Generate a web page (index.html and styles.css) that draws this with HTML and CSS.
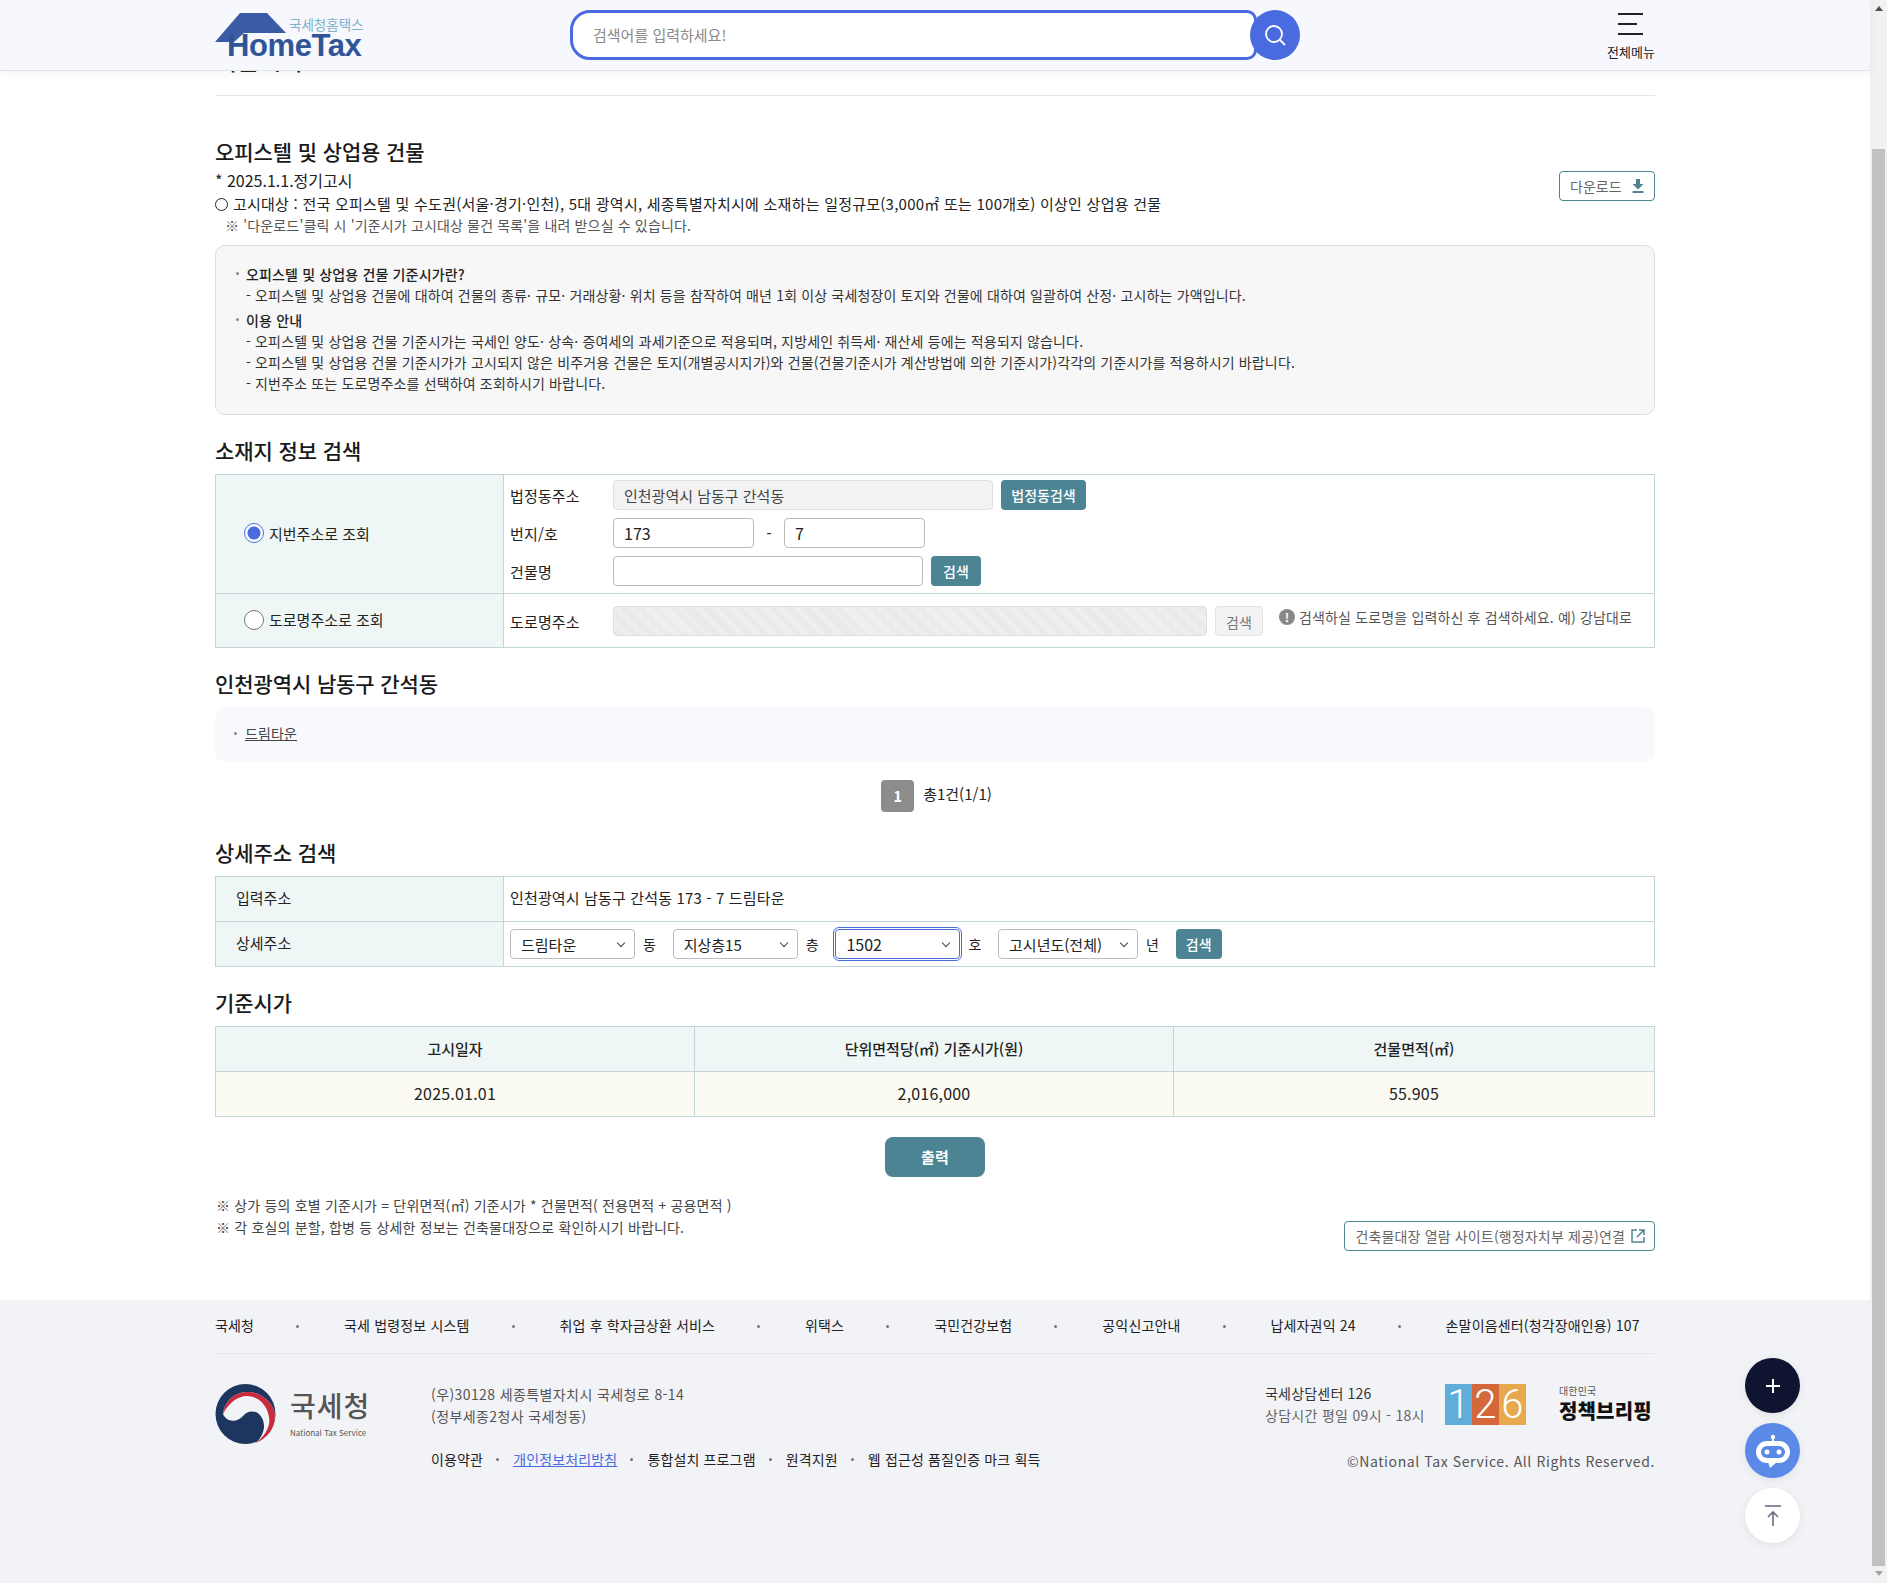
FILE: index.html
```html
<!DOCTYPE html>
<html lang="ko">
<head>
<meta charset="utf-8">
<title>오피스텔 및 상업용 건물 기준시가</title>
<link rel="stylesheet" href="styles.css">
</head>
<body>
<div class="page">
<div class="view">

<div class="topbar">
  <div class="topbar-in">
    <a class="logo">
      <svg class="logo-roof" width="71" height="30" viewBox="0 0 71 30"><polygon points="25,0 52,0 71,20 29,20 19,29 0,29" fill="#3a5ba5"/></svg>
      <span class="logo-ko">국세청홈택스</span>
      <span class="logo-en">HomeTax</span>
    </a>
    <div class="search">
      <input class="search-input" type="text" placeholder="검색어를 입력하세요!">
      <span class="search-btn">
        <svg width="24" height="24" viewBox="0 0 24 24" fill="none" stroke="#fff" stroke-width="1.8"><circle cx="11" cy="11" r="8"/><path d="M17 17l5 5"/></svg>
      </span>
    </div>
    <div class="allmenu">
      <span class="bar"></span>
      <span class="bar bar-mid"></span>
      <span class="bar"></span>
      <span class="allmenu-txt">전체메뉴</span>
    </div>
  </div>
</div>

<div class="wrap">
  <div class="page-title">기준시가</div>

  <h2 class="first-h">오피스텔 및 상업용 건물</h2>
  <div class="intro">
    <div>
      <p class="intro-date">* 2025.1.1.정기고시</p>
      <p class="intro-target"><span class="ring"></span>고시대상 : 전국 오피스텔 및 수도권(서울·경기·인천), 5대 광역시, 세종특별자치시에 소재하는 일정규모(3,000㎡ 또는 100개호) 이상인 상업용 건물</p>
      <p class="intro-note">※ '다운로드'클릭 시 '기준시가 고시대상 물건 목록'을 내려 받으실 수 있습니다.</p>
    </div>
    <a class="btn-line btn-down">다운로드
      <svg width="12" height="14" viewBox="0 0 12 14" fill="#4c8494"><path d="M4 0h4v5h3.500L6 10.500 0.500 5H4z"/><rect x="0.500" y="12" width="11" height="2"/></svg>
    </a>
  </div>

  <div class="infobox">
    <p class="info-t"><b>오피스텔 및 상업용 건물 기준시가란?</b></p>
    <p class="info-d">- 오피스텔 및 상업용 건물에 대하여 건물의 종류· 규모· 거래상황· 위치 등을 참작하여 매년 1회 이상 국세청장이 토지와 건물에 대하여 일괄하여 산정· 고시하는 가액입니다.</p>
    <p class="info-t info-gap"><b>이용 안내</b></p>
    <p class="info-d">- 오피스텔 및 상업용 건물 기준시가는 국세인 양도· 상속· 증여세의 과세기준으로 적용되며, 지방세인 취득세· 재산세 등에는 적용되지 않습니다.</p>
    <p class="info-d">- 오피스텔 및 상업용 건물 기준시가가 고시되지 않은 비주거용 건물은 토지(개별공시지가)와 건물(건물기준시가 계산방법에 의한 기준시가)각각의 기준시가를 적용하시기 바랍니다.</p>
    <p class="info-d">- 지번주소 또는 도로명주소를 선택하여 조회하시기 바랍니다.</p>
  </div>

  <h2>소재지 정보 검색</h2>
  <table class="tbl">
    <tr>
      <th class="th-radio"><label class="radio"><input type="radio" name="addr" checked>지번주소로 조회</label></th>
      <td class="td-form">
        <div class="frow">
          <span class="flabel">법정동주소</span>
          <input class="inp inp-addr inp-ro" type="text" value="인천광역시 남동구 간석동" readonly>
          <a class="btn btn-law">법정동검색</a>
        </div>
        <div class="frow">
          <span class="flabel">번지/호</span>
          <input class="inp inp-num" type="text" value="173">
          <span class="dash">-</span>
          <input class="inp inp-num" type="text" value="7">
        </div>
        <div class="frow">
          <span class="flabel">건물명</span>
          <input class="inp inp-bld" type="text">
          <a class="btn btn-sm">검색</a>
        </div>
      </td>
    </tr>
    <tr>
      <th class="th-radio"><label class="radio"><input type="radio" name="addr">도로명주소로 조회</label></th>
      <td class="td-form td-road">
        <div class="frow">
          <span class="flabel">도로명주소</span>
          <div class="inp inp-road"></div>
          <a class="btn-off">검색</a>
          <span class="hint"><span class="hint-ico">!</span>검색하실 도로명을 입력하신 후 검색하세요. 예) 강남대로</span>
        </div>
      </td>
    </tr>
  </table>

  <h2>인천광역시 남동구 간석동</h2>
  <div class="listbox"><span class="dot"></span><a class="listlink">드림타운</a></div>

  <div class="paging"><span class="pg-on">1</span><span class="pg-total">총1건(1/1)</span></div>

  <h2 class="h-detail">상세주소 검색</h2>
  <table class="tbl tbl-detail">
    <tr class="row-addr">
      <th class="th-left">입력주소</th>
      <td class="td-val">인천광역시 남동구 간석동 173 - 7 드림타운</td>
    </tr>
    <tr>
      <th class="th-left">상세주소</th>
      <td class="td-val">
        <div class="selrow">
          <span class="sel"><select><option>드림타운</option></select></span><span class="unit">동</span>
          <span class="sel"><select><option>지상층15</option></select></span><span class="unit">층</span>
          <span class="sel sel-focus"><select><option>1502</option></select></span><span class="unit">호</span>
          <span class="sel sel-year"><select><option>고시년도(전체)</option></select></span><span class="unit">년</span>
          <a class="btn btn-sm btn-detail">검색</a>
        </div>
      </td>
    </tr>
  </table>

  <h2 class="h-price">기준시가</h2>
  <table class="tbl tbl-price">
    <tr>
      <th class="col-a">고시일자</th>
      <th class="col-b">단위면적당(㎡) 기준시가(원)</th>
      <th>건물면적(㎡)</th>
    </tr>
    <tr>
      <td>2025.01.01</td>
      <td>2,016,000</td>
      <td>55.905</td>
    </tr>
  </table>

  <div class="print-wrap"><a class="btn-print">출력</a></div>

  <div class="notes">
    <div>
      <p>※ 상가 등의 호별 기준시가 = 단위면적(㎡) 기준시가 * 건물면적( 전용면적 + 공용면적 )</p>
      <p>※ 각 호실의 분할, 합병 등 상세한 정보는 건축물대장으로 확인하시기 바랍니다.</p>
    </div>
    <a class="btn-line btn-ext">건축물대장 열람 사이트(행정자치부 제공)연결
      <svg width="14" height="14" viewBox="0 0 14 14" fill="none" stroke="#4c8494" stroke-width="1.500"><path d="M6 1H1v12h12V8"/><path d="M8 1h5v5M13 1L6 8"/></svg>
    </a>
  </div>
</div>

<div class="footer">
  <div class="foot-in">
    <ul class="foot-links">
      <li>국세청</li>
      <li>국세 법령정보 시스템</li>
      <li>취업 후 학자금상환 서비스</li>
      <li>위택스</li>
      <li>국민건강보험</li>
      <li>공익신고안내</li>
      <li>납세자권익 24</li>
      <li>손말이음센터(청각장애인용) 107</li>
    </ul>
    <div class="foot-body">
      <div class="nts">
        <svg width="61" height="60" viewBox="0 0 61 60">
          <circle cx="30.500" cy="30" r="30" fill="#1d365f"/>
          <path d="M8 30C10 15 22 7 35 8c15 2 25 14 25 24 0 13-8 22-19 27 9-9 11-21 3-29-6-5-13-2-16 2-4 5-12 6-16 3-2-2-3.500-3-4-5z" fill="#f2f3f7"/>
          <path d="M8 30C10 15 22 7 35 8c15 2 25 14 25 24 0 13-8 22-19 27 9-7 15-17 13-26C52 20 42 12 32 12 22 12 13 20 8 30z" fill="#c72b3c"/>
        </svg>
        <div class="nts-txt">
          <span class="nts-ko">국세청</span>
          <span class="nts-en">National Tax Service</span>
        </div>
      </div>
      <div class="foot-mid">
        <p class="addr">(우)30128 세종특별자치시 국세청로 8-14</p>
        <p class="addr">(정부세종2청사 국세청동)</p>
        <ul class="foot-sub">
          <li>이용약관</li>
          <li><a class="privacy">개인정보처리방침</a></li>
          <li>통합설치 프로그램</li>
          <li>원격지원</li>
          <li>웹 접근성 품질인증 마크 획득</li>
        </ul>
      </div>
      <div class="foot-right">
        <div class="foot-call">
          <div class="call-txt">
            <p class="call-t">국세상담센터 126</p>
            <p class="call-d">상담시간 평일 09시 - 18시</p>
          </div>
          <div class="n126"><span class="n1">1</span><span class="n2">2</span><span class="n6">6</span></div>
          <div class="brief">
            <span class="brief-s">대한민국</span>
            <span class="brief-b">정책브리핑</span>
          </div>
        </div>
        <p class="copy">©National Tax Service. All Rights Reserved.</p>
      </div>
    </div>
  </div>
</div>

<div class="fabs">
  <span class="fab fab-plus">
    <svg width="20" height="20" viewBox="0 0 20 20" stroke="#fff" stroke-width="2"><path d="M10 3v14M3 10h14"/></svg>
  </span>
  <span class="fab fab-bot">
    <svg width="55" height="55" viewBox="0 0 55 55">
      <circle cx="28" cy="14" r="2.200" fill="#fff"/>
      <rect x="27" y="14" width="2" height="5" fill="#fff"/>
      <rect x="11" y="18" width="34" height="22" rx="11" fill="#fff"/>
      <path d="M23 39h9l-7 6z" fill="#fff"/>
      <rect x="16" y="23" width="24" height="12" rx="6" fill="#5b89e8"/>
      <circle cx="22" cy="29" r="2.500" fill="#fff"/>
      <circle cx="34" cy="29" r="2.500" fill="#fff"/>
    </svg>
  </span>
  <span class="fab fab-top">
    <svg width="20" height="24" viewBox="0 0 20 24" fill="none" stroke="#6d6d86" stroke-width="1.600"><path d="M2 2h16"/><path d="M10 22V9M5 13l5-5 5 5"/></svg>
  </span>
</div>

</div>
<div class="sbar">
  <span class="sbar-up"></span>
  <span class="sbar-thumb"></span>
  <span class="sbar-down"></span>
</div>
</div>
</body>
</html>
```

FILE: styles.css
```css
*{
box-sizing:border-box;
}

html,body{
margin:0;
padding:0;
height:100%;
overflow:hidden;
}

body{
font-family:"Noto Sans CJK KR","Noto Sans",sans-serif;
font-size:14px;
letter-spacing:0.15px;
color:#222222;
background:#ffffff;
}

p,ul,h2{
margin:0;
padding:0;
}

ul{
list-style-type:none;
}

input,select{
font-family:inherit;
}

.page{
display:flex;
width:1887px;
height:1583px;
}

.view{
position:relative;
flex:1;
display:flex;
flex-direction:column;
min-width:0;
}

/* scrollbar */
.sbar{
width:17px;
background:#f1f1f1;
display:flex;
flex-direction:column;
align-items:center;
}

.sbar-up,.sbar-down{
width:0;
height:0;
border-left:4px solid transparent;
border-right:4px solid transparent;
}

.sbar-up{
margin-top:6px;
border-bottom:5px solid #505050;
}

.sbar-thumb{
width:13px;
height:1417px;
margin-top:138px;
background:#c1c1c1;
}

.sbar-down{
margin-top:5px;
border-top:5px solid #a3a3a3;
}

/* top bar */
.topbar{
position:absolute;
top:0;
left:0;
right:0;
height:71px;
background:#f7f8fe;
border-bottom:1px solid #e2e3ea;
box-shadow:0 3px 10px rgba(0,0,0,0.04);
z-index:5;
}

.topbar-in{
position:relative;
width:1440px;
height:70px;
margin:0 auto;
display:flex;
}

.logo{
position:relative;
width:148px;
height:46px;
margin-top:13px;
}

.logo-roof{
display:block;
}

.logo-ko{
position:absolute;
top:4px;
left:74px;
font-size:13.500px;
line-height:14px;
letter-spacing:0;
color:#7db0c9;
white-space:nowrap;
}

.logo-en{
position:absolute;
top:20px;
left:12px;
font-family:"Liberation Sans",sans-serif;
font-size:31px;
line-height:25px;
font-weight:bold;
letter-spacing:-0.400px;
color:#2f5597;
white-space:nowrap;
}

.search{
display:flex;
margin:10px 0 0 207px;
height:50px;
}

.search-input{
width:687px;
height:50px;
padding:0 20px 2px 20px;
border:3px solid #4a6be0;
border-radius:20px 10px 10px 20px;
background:#ffffff;
font-size:15px;
letter-spacing:0;
outline:none;
}

.search-input::placeholder{
color:#8a8a8a;
}

.search-btn{
width:50px;
height:50px;
margin-left:-7px;
border-radius:50%;
background:#4a6be0;
display:flex;
align-items:center;
justify-content:center;
}

.allmenu{
margin-left:auto;
width:48px;
margin-top:13px;
display:flex;
flex-direction:column;
align-items:flex-start;
}

.bar{
display:block;
width:25px;
height:2px;
margin:0 0 8px 11px;
background:#222222;
}

.bar-mid{
width:19px;
}

.allmenu-txt{
font-size:13px;
line-height:16px;
margin-top:1px;
letter-spacing:0;
white-space:nowrap;
}

/* main */
.wrap{
width:1440px;
margin:0 auto;
padding-bottom:49px;
}

.page-title{
height:96px;
padding-top:44px;
border-bottom:1px solid #e5e5e5;
font-size:24px;
line-height:32px;
font-weight:500;
}

h2{
margin-top:21px;
margin-bottom:10px;
font-size:21px;
line-height:28px;
font-weight:500;
letter-spacing:-0.100px;
color:#1a1a1a;
}

h2.first-h{
margin-top:41px;
margin-bottom:1px;
}

.h-detail{
margin-top:26px;
}

.h-price{
margin-top:21px;
margin-bottom:10px;
}

.intro{
display:flex;
justify-content:space-between;
align-items:flex-start;
}

.intro-date{
height:24px;
margin-top:2px;
font-size:16px;
line-height:24px;
letter-spacing:0;
}

.intro-target{
display:flex;
align-items:center;
height:24px;
font-size:15px;
line-height:24px;
letter-spacing:0.24px;
}

.ring{
width:13px;
height:13px;
margin-right:5px;
border:1px solid #222222;
border-radius:50%;
}

.intro-note{
height:20px;
padding-left:10px;
font-size:14px;
line-height:18px;
color:#555555;
}

.btn-line{
display:inline-flex;
align-items:center;
height:30px;
border:1px solid #4c8494;
border-radius:4px;
font-size:14px;
color:#666666;
white-space:nowrap;
background:#ffffff;
}

.btn-down{
width:96px;
margin-top:5px;
padding-left:10px;
gap:10px;
letter-spacing:0;
}

.infobox{
height:170px;
margin-top:9px;
padding:18px 16px 0 16px;
background:#f7f7f7;
border:1px solid #dddddd;
border-radius:10px;
line-height:21px;
}

.info-t{
position:relative;
padding-left:14px;
font-size:14px;
}

.info-t b{
font-weight:500;
}

.info-t:before{
content:"";
position:absolute;
left:4px;
top:8px;
width:3px;
height:3px;
background:#888888;
border-radius:50%;
}

.info-gap{
margin-top:4px;
}

.info-d{
padding-left:14px;
color:#333333;
}

/* tables */
.tbl{
width:1440px;
border-collapse:collapse;
table-layout:fixed;
border:1px solid #c2d6da;
}

.tbl th,.tbl td{
border:1px solid #c2d6da;
padding:0;
}

.tbl th{
background:#eff7f6;
font-weight:400;
letter-spacing:0;
}

.th-radio,.th-left{
width:288px;
text-align:left;
}

.th-radio{
padding-left:28px !important;
}

.radio{
display:flex;
align-items:center;
font-size:15px;
gap:5px;
padding-bottom:2px;
}

.radio input{
appearance:none;
margin:0;
width:20px;
height:20px;
border:1px solid #777777;
border-radius:50%;
background:#ffffff;
}

.radio input:checked{
border-color:#4a6be0;
background:radial-gradient(circle,#4a6be0 0 6px,#ffffff 7px);
}

.td-form{
padding:5px 0 7px 6px !important;
height:119px;
}

.td-road{
height:54px;
padding:1px 0 0 6px !important;
}

.frow{
display:flex;
align-items:center;
height:30px;
margin-bottom:8px;
}

.frow:last-child{
margin-bottom:0;
}

.flabel{
width:103px;
font-size:15px;
padding-top:1px;
flex:none;
}

.inp{
height:30px;
padding:0 10px;
border:1px solid #bbbbbb;
border-radius:4px;
font-size:15px;
color:#222222;
background:#ffffff;
outline:none;
}

.inp-addr{
width:380px;
}

.inp-ro{
background:#f2f2f2;
border-color:#e0e0e0;
color:#444444;
}

.inp-num{
width:141px;
font-size:16px;
}

.dash{
width:30px;
text-align:center;
font-weight:500;
}

.inp-bld{
width:310px;
}

.inp-road{
width:594px;
border-color:#dddddd;
background:repeating-linear-gradient(45deg,#e6e6e6 0,#e6e6e6 1px,#f3f3f3 1px,#f3f3f3 2px);
}

.btn{
display:inline-flex;
align-items:center;
justify-content:center;
height:30px;
background:#4c8494;
border-radius:4px;
color:#ffffff;
font-size:14px;
font-weight:500;
letter-spacing:0;
}

.btn-law{
width:85px;
margin-left:8px;
}

.btn-sm{
width:50px;
margin-left:8px;
}

.btn-off{
display:inline-flex;
align-items:center;
justify-content:center;
width:48px;
height:30px;
margin-left:8px;
padding-top:2px;
background:#f3f3f3;
border:1px solid #e2e2e2;
border-radius:4px;
color:#777777;
font-size:14px;
}

.hint{
display:flex;
align-items:center;
margin:-8px 0 0 16px;
font-size:14px;
color:#555555;
white-space:nowrap;
}

.hint-ico{
width:16px;
height:16px;
margin-right:4px;
border-radius:50%;
background:#888888;
color:#ffffff;
font-size:12px;
font-weight:700;
line-height:16px;
text-align:center;
}

.listbox{
display:flex;
align-items:center;
height:55px;
padding:0 0 3px 19px;
background:#f8f9fd;
border-radius:10px;
}

.dot{
width:3px;
height:3px;
margin-right:8px;
border-radius:50%;
background:#888888;
}

.listlink{
font-size:14px;
color:#444444;
text-decoration:underline;
}

.paging{
display:flex;
align-items:center;
justify-content:center;
height:32px;
margin-top:18px;
padding-left:3px;
}

.pg-on{
width:33px;
height:32px;
margin-right:9px;
background:#8c8c8c;
border-radius:4px;
color:#ffffff;
font-size:15px;
font-weight:700;
line-height:32px;
text-align:center;
}

.pg-total{
font-size:15px;
letter-spacing:0;
margin-bottom:6px;
}

.tbl-detail tr{
height:45px;
}

.th-left{
padding:0 0 3px 20px !important;
font-size:15px;
}

.td-val{
padding:0 0 0 6px !important;
font-size:15px;
}

.row-addr .td-val{
padding-bottom:3px !important;
}

.selrow{
display:flex;
align-items:center;
}

.sel{
position:relative;
display:block;
width:125px;
height:30px;
flex:none;
}

.sel select{
appearance:none;
display:block;
width:100%;
height:30px;
padding:0 10px;
border:1px solid #bbbbbb;
border-radius:4px;
background:#ffffff;
font-size:15px;
color:#222222;
outline:none;
}

.sel:after{
content:"";
position:absolute;
right:11px;
top:11px;
width:5px;
height:5px;
border-right:1px solid #444444;
border-bottom:1px solid #444444;
transform:rotate(45deg);
}

.sel-focus select{
border-color:#4a6be0;
font-size:16px;
outline:1px solid #4a6be0;
outline-offset:1px;
}

.sel-year{
width:140px;
}

.unit{
width:37.700px;
padding-left:8px;
font-size:14px;
flex:none;
}

.btn-detail{
width:46px;
margin-left:0;
}

.tbl-price th,.tbl-price td{
height:45px;
padding-bottom:2px;
text-align:center;
font-size:15px;
}

.tbl-price th{
font-weight:500;
}

.tbl-price td{
background:#fbfaf3;
font-size:16px;
letter-spacing:0.2px;
}

.col-a{
width:479px;
}

.col-b{
width:479px;
}

.print-wrap{
margin-top:20px;
text-align:center;
}

.btn-print{
display:inline-block;
width:100px;
height:40px;
background:#4c8494;
border-radius:8px;
color:#ffffff;
font-size:15px;
font-weight:700;
line-height:40px;
text-align:center;
}

.notes{
display:flex;
justify-content:space-between;
align-items:flex-end;
margin-top:17px;
line-height:22px;
color:#444444;
}

.notes p{
font-size:14px;
letter-spacing:0.18px;
}

.notes>div{
padding-bottom:13px;
padding-left:1px;
}

.btn-ext{
padding:0 9px 0 10px;
gap:6px;
height:30px;
}

/* footer */
.footer{
flex:1;
background:#f2f3f7;
}

.foot-in{
width:1440px;
margin:0 auto;
}

.foot-links{
display:flex;
height:54px;
padding-bottom:4px;
align-items:center;
border-bottom:1px solid #e5e7ec;
font-size:14px;
}

.foot-links li{
position:relative;
margin-right:90px;
white-space:nowrap;
}

.foot-links li:last-child{
margin-right:0;
}

.foot-links li:after{
content:"";
position:absolute;
right:-45px;
top:10px;
width:3px;
height:3px;
border-radius:50%;
background:#777777;
}

.foot-links li:last-child:after{
display:none;
}

.foot-body{
display:flex;
padding-top:30px;
}

.nts{
display:flex;
width:216px;
}

.nts-txt{
margin-left:14px;
display:flex;
flex-direction:column;
color:#555555;
}

.nts-ko{
font-size:28px;
line-height:38px;
letter-spacing:1px;
font-weight:500;
margin-top:2px;
}

.nts-en{
font-size:8px;
line-height:12px;
margin-top:3px;
letter-spacing:0;
white-space:nowrap;
}

.foot-mid{
margin-top:-1px;
}

.addr{
font-size:14px;
line-height:22px;
letter-spacing:0.4px;
color:#555555;
}

.foot-sub{
display:flex;
margin-top:21px;
font-size:14px;
line-height:22px;
}

.foot-sub li{
position:relative;
margin-right:30px;
white-space:nowrap;
}

.foot-sub li:last-child{
margin-right:0;
}

.foot-sub li:after{
content:"";
position:absolute;
right:-16px;
top:10px;
width:3px;
height:3px;
border-radius:50%;
background:#777777;
}

.foot-sub li:last-child:after{
display:none;
}

.privacy{
color:#4a6be0;
text-decoration:underline;
}

.foot-right{
margin-left:auto;
width:390px;
}

.foot-call{
display:flex;
align-items:flex-start;
}

.call-txt{
width:180px;
margin-top:-2px;
}

.call-t{
font-size:14px;
line-height:22px;
letter-spacing:0.2px;
color:#333333;
}

.call-d{
font-size:14px;
line-height:22px;
letter-spacing:0.3px;
color:#666666;
}

.n126{
display:flex;
width:81px;
height:41px;
}

.n126 span{
flex:1;
color:#ffffff;
font-family:"Roboto",sans-serif;
font-weight:300;
font-size:40px;
line-height:41px;
text-align:center;
}

.n1{
background:#5fadd9;
}

.n2{
background:#d4683a;
}

.n6{
background:#e8a94e;
}

.brief{
margin-left:33px;
display:flex;
flex-direction:column;
}

.brief-s{
font-size:10px;
line-height:13px;
color:#555555;
}

.brief-b{
margin-top:4px;
font-size:20px;
line-height:20px;
font-weight:900;
color:#111111;
white-space:nowrap;
}

.copy{
margin-top:25px;
text-align:right;
font-size:14px;
line-height:20px;
letter-spacing:0.6px;
color:#555555;
}

/* floating buttons */
.fabs{
position:absolute;
left:1745px;
top:1358px;
display:flex;
flex-direction:column;
gap:10px;
z-index:6;
}

.fab{
display:flex;
align-items:center;
justify-content:center;
width:55px;
height:55px;
border-radius:50%;
box-shadow:0 2px 8px rgba(0,0,0,0.08);
}

.fab-plus{
background:#0f1430;
}

.fab-bot{
background:#5b89e8;
}

.fab-top{
background:#ffffff;
}
```
